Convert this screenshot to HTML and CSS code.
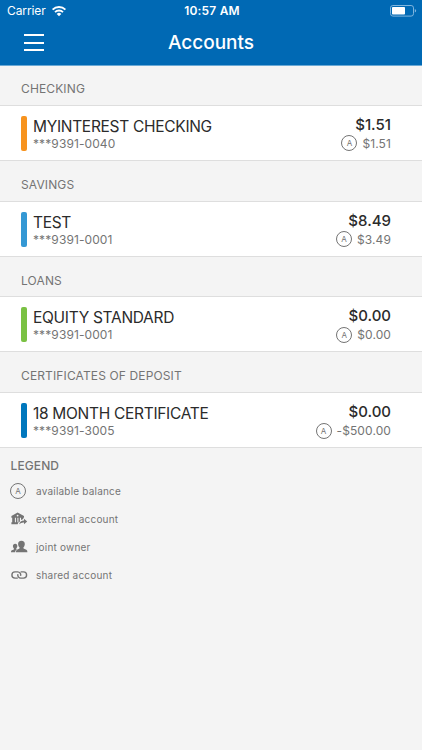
FILE: index.html
```html
<!DOCTYPE html>
<html lang="en">
<head>
  <meta charset="UTF-8" />
  <meta name="viewport" content="width=device-width, initial-scale=1.0"/>
  <title>Accounts</title>
  <link rel="stylesheet" href="styles.css">
</head>
<body>
  <header class="top">
    <div class="status-bar">
      <div class="carrier">
        <span>Carrier</span>
        <svg class="wifi" viewBox="0 0 16 12">
          <path d="M1.6 4.6a9.2 9.2 0 0 1 12.8 0M4 7.1a5.8 5.8 0 0 1 8 0" fill="none" stroke="#fff" stroke-width="1.9"/>
          <path d="M8 11.2 5.7 8.9a3.3 3.3 0 0 1 4.6 0z" fill="#fff"/>
        </svg>
      </div>
      <span class="time">10:57 AM</span>
      <svg class="battery" viewBox="0 0 27 12">
        <rect x=".5" y=".5" width="23" height="10.6" rx="2.4" fill="none" stroke="#7fb5de"/>
        <rect x="2" y="2" width="13" height="7.6" rx=".8" fill="#fff"/>
        <path d="M24.8 4v3.6q1.4-.5 1.4-1.8T24.8 4z" fill="#7fb5de"/>
      </svg>
    </div>
    <div class="nav-bar">
      <div class="menu"><i></i><i></i><i></i></div>
      <h1>Accounts</h1>
    </div>
  </header>

  <main>
    <h2 class="first">CHECKING</h2>
    <div class="account">
      <div class="stripe orange"></div>
      <div class="info">
        <div class="name">MYINTEREST CHECKING</div>
        <div class="number">***9391-0040</div>
      </div>
      <div class="amounts">
        <div class="balance">$1.51</div>
        <div class="available"><span class="badge">A</span>$1.51</div>
      </div>
    </div>

    <h2>SAVINGS</h2>
    <div class="account">
      <div class="stripe sky"></div>
      <div class="info">
        <div class="name">TEST</div>
        <div class="number">***9391-0001</div>
      </div>
      <div class="amounts">
        <div class="balance">$8.49</div>
        <div class="available"><span class="badge">A</span>$3.49</div>
      </div>
    </div>

    <h2>LOANS</h2>
    <div class="account">
      <div class="stripe green"></div>
      <div class="info">
        <div class="name">EQUITY STANDARD</div>
        <div class="number">***9391-0001</div>
      </div>
      <div class="amounts">
        <div class="balance">$0.00</div>
        <div class="available"><span class="badge">A</span>$0.00</div>
      </div>
    </div>

    <h2>CERTIFICATES OF DEPOSIT</h2>
    <div class="account">
      <div class="stripe blue"></div>
      <div class="info">
        <div class="name">18 MONTH CERTIFICATE</div>
        <div class="number">***9391-3005</div>
      </div>
      <div class="amounts">
        <div class="balance">$0.00</div>
        <div class="available"><span class="badge">A</span>-$500.00</div>
      </div>
    </div>
  </main>

  <section class="legend">
    <h3>LEGEND</h3>
    <ul>
      <li><span class="badge">A</span>available balance</li>
      <li>
        <svg viewBox="0 0 18 14">
          <path d="M7.6.5 14 4v1.800H1.400V4zM2.200 5.500h2.700v5.200H2.200zM5.900 5.500h1.500v5.200H5.900zM8.400 5.500h1.500v3.900l-1.500 1.300zM11 5.500h2.300v1.400l-2.300 1zM1.400 10.200h6.900l-.6 2.100H1.400z"/>
          <path d="M14 6.800 17.200 9.500 14 12.200v-1.600q-2.800-.2-4.900 1.700.8-3.800 4.900-3.900z"/>
          <circle cx="7.6" cy="3.6" r=".9" fill="#f4f4f4"/>
        </svg>
        external account
      </li>
      <li>
        <svg viewBox="0 0 18 14">
          <path d="M11.400.7c2.300 0 3.500 1.300 3.400 3.500-.1 1.700-.8 2.500-1.400 3.200v.9c.4.8 3.200 1 3.700 2.100.2.500.3 1.300.3 1.800H6c0-.7 0-1.300.3-1.800.5-1 3-1.300 3.300-2.100v-.9C8.900 6.700 8.200 5.900 8.100 4.200 8 2.100 9.200.7 11.400.7z"/>
          <path d="M5.200 3.800c1.500 0 2.200 1 2.100 2.400-.1 1.200-.6 1.700-1 2.200v.6l.5.400c-1 .5-1.500 1.200-1.600 2.800H1c0-.6 0-1.100.3-1.500.4-.7 2.300-.9 2.600-1.500v-.8C3.400 7.900 3 7.400 2.900 6.200 2.900 4.800 3.700 3.800 5.200 3.800z"/>
        </svg>
        joint owner
      </li>
      <li>
        <svg class="link" viewBox="0 0 18 14">
          <path d="M7.800 10.100H5A3.100 3.100 0 0 1 5 3.900H7.700A3.100 3.100 0 0 1 10.600 7.900M10.600 3.900H13.500A3.100 3.100 0 0 1 13.500 10.100H10.800A3.100 3.100 0 0 1 7.900 6.100"/>
        </svg>
        shared account
      </li>
    </ul>
  </section>
</body>
</html>
```
FILE: styles.css
```css
body {
  margin: 0;
  min-height: 750px;
  font-family: Inter, "Liberation Sans", sans-serif;
  background-color: #f4f4f4;
  color: #747474;
}

h1, h2, h3, ul {
  margin: 0;
  padding: 0;
  font-weight: 400;
}

/* Header */
.top {
  height: 66px;
  background-color: #0069b4;
  border-bottom: 1px solid #6aa9d5;
  box-sizing: border-box;
  color: #fff;
}

.status-bar {
  display: grid;
  grid-template-columns: 1fr auto 1fr;
  align-items: center;
  height: 21px;
  padding: 0 5px 0 7px;
  font-size: 12px;
}

.carrier {
  display: flex;
  align-items: center;
  gap: 5px;
  letter-spacing: -0.1px;
}

.wifi {
  width: 16px;
  height: 12px;
}

.time {
  font-weight: 600;
  letter-spacing: 0.2px;
}

.battery {
  width: 27px;
  height: 12px;
  justify-self: end;
}

.nav-bar {
  display: grid;
  grid-template-columns: 1fr auto 1fr;
  align-items: center;
  height: 43px;
}

.menu {
  display: flex;
  flex-direction: column;
  gap: 5.5px;
  margin-left: 24px;
}

.menu i {
  width: 20px;
  height: 2px;
  background: #fff;
}

h1 {
  padding-top: 1px;
  font-size: 19px;
  line-height: 24px;
  font-weight: 500;
}

/* Account list */
h2 {
  height: 39.75px;
  padding-left: 21px;
  font-size: 12px;
  line-height: 47px;
  letter-spacing: 0.13px;
  overflow: hidden;
}

h2.first {
  height: 38.75px;
  line-height: 46px;
}

.account {
  display: flex;
  box-sizing: border-box;
  height: 56px;
  padding: 10px 31px 0 21px;
  background: #fff;
  border-top: 1px solid #dedede;
  border-bottom: 1px solid #dedede;
}

.stripe {
  width: 6px;
  height: 35px;
  margin-right: 6px;
  border-radius: 2px;
}

.orange { background: #f7931e; }
.sky { background: #3498d4; }
.green { background: #7ac143; }
.blue { background: #0077bd; }

.info {
  flex: 1;
}

.name {
  padding-top: 1px;
  font-size: 15.5px;
  line-height: 20px;
  letter-spacing: -0.3px;
  color: #2b2b2b;
}

.number {
  font-size: 12px;
  line-height: 14px;
  letter-spacing: 0.1px;
}

.amounts {
  text-align: right;
}

.balance {
  margin-top: -1px;
  font-size: 15px;
  line-height: 20px;
  font-weight: 500;
  color: #2b2b2b;
}

.available {
  display: flex;
  align-items: center;
  justify-content: flex-end;
  height: 17px;
  font-size: 12px;
  letter-spacing: 0.1px;
}

.badge {
  box-sizing: border-box;
  width: 16px;
  height: 16px;
  margin-right: 5px;
  border: 1px solid #747474;
  border-radius: 50%;
  font-size: 8px;
  line-height: 14px;
  letter-spacing: 0;
  text-align: center;
}

/* Legend */
.legend {
  padding: 9px 10.5px;
}

h3 {
  margin-bottom: 2px;
  font-size: 12px;
  line-height: 18px;
  font-weight: 500;
  letter-spacing: 0.1px;
}

.legend li {
  display: flex;
  align-items: center;
  height: 28px;
  font-size: 10px;
  letter-spacing: 0.2px;
}

.legend .badge {
  margin-left: -0.5px;
  margin-right: 10px;
}

.legend svg {
  width: 18px;
  height: 14px;
  margin-left: -0.5px;
  margin-right: 8px;
  fill: #747474;
}

.legend .link {
  fill: none;
  stroke: #747474;
  stroke-width: 1.4;
}
```
